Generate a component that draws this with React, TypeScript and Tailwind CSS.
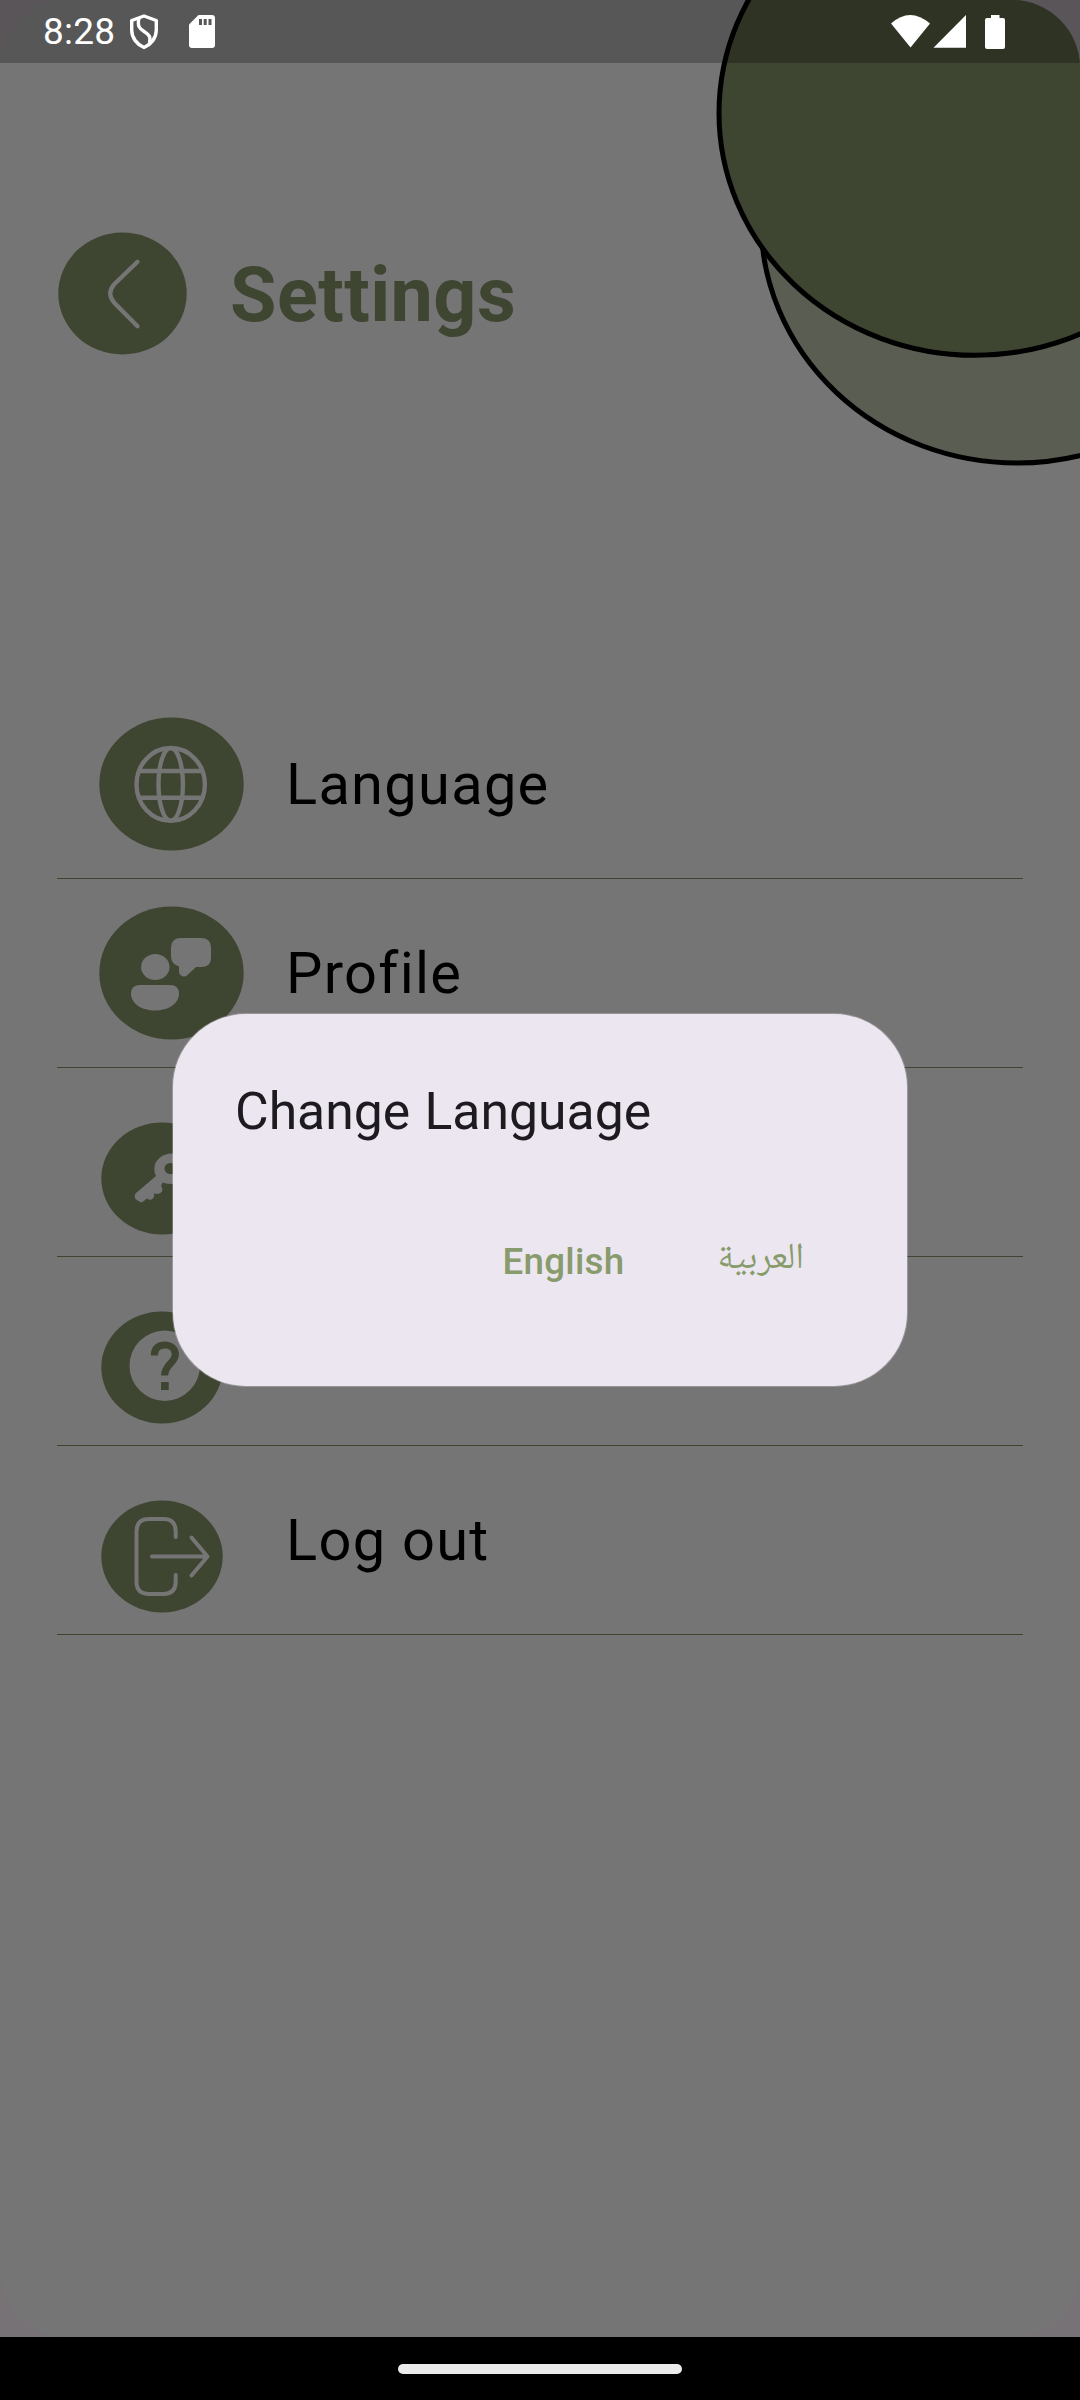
import React from "react";

type BadgeProps = { w: number; h: number; children?: React.ReactNode };

function Badge({ w, h, children }: BadgeProps) {
  return (
    <svg width={w} height={h} viewBox={`0 0 ${w} ${h}`} fill="none" className="block shrink-0">
      <ellipse cx={w / 2} cy={h / 2} rx={w / 2 - 0.3} ry={h / 2 - 0.5} fill="#3e4531" />
      {children}
    </svg>
  );
}

function GlobeIcon() {
  return (
    <Badge w={145} h={134}>
      <g stroke="#757575" strokeWidth="4.4">
        <ellipse cx="71.7" cy="67.4" rx="34.2" ry="36.4" />
        <ellipse cx="71.7" cy="67.4" rx="12.2" ry="36.4" />
        <path d="M41 54H102M41 80.7H102" />
      </g>
    </Badge>
  );
}

function ProfileIcon() {
  return (
    <Badge w={145} h={134}>
      <g fill="#757575">
        <ellipse cx="56.3" cy="61" rx="14.2" ry="13" />
        <path d="M41 79H71Q80 79 80 87.5C80 98 69 104.5 56 104.5C43 104.5 32 98 32 87.5Q32 79 41 79Z" />
        <path d="M82 32H102Q112 32 112 41.500V52Q112 61 102 61H97L88.500 69Q86 71.500 83 70Q80 69 80 65V60.500Q72 58 72 50V41.500Q72 32 82 32Z" />
      </g>
    </Badge>
  );
}

function KeyIcon() {
  return (
    <Badge w={122} h={113}>
      <path
        d="M71 31.500C61 31.500 53.300 38 53.300 47Q53.300 51 55 54L35 71Q32.500 74 34.500 77L39 80Q41.500 81 43.500 78.500L46 76.500Q49 79 52 76.500Q54 74 53 71.500Q59 73 61 69.500Q62 66 60 64L61.500 60.500Q66 62 71 62C81 62 88 55 88 47C88 38 81 31.500 71 31.500Z"
        fill="#757575"
      />
      <ellipse cx="69.500" cy="46.500" rx="6" ry="5.600" fill="#3e4531" />
    </Badge>
  );
}

function HelpIcon() {
  return (
    <Badge w={122} h={113}>
      <circle cx="63.700" cy="54.700" r="35.200" fill="#757575" />
      <path
        d="M53.300 44.500C53.300 37 58 34 63.700 34C70 34 74.300 38 74.300 43.500C74.300 52 63.700 53 63.700 64.500"
        stroke="#3e4531"
        strokeWidth="7.200"
      />
      <rect x="60" y="71" width="7.700" height="8" fill="#3e4531" />
    </Badge>
  );
}

function LogoutIcon() {
  return (
    <Badge w={122} h={113}>
      <g stroke="#757575" strokeWidth="4" strokeLinecap="round" strokeLinejoin="round">
        <path d="M74.700 37V31.500Q74.700 19 62.500 19H48Q35.500 19 35.500 31.500V81.500Q35.500 94 48 94H62.500Q74.700 94 74.700 81.500V75" />
        <path d="M51 56.500H106.500M90.500 37.500L106.500 56.500L90.500 75.500" />
      </g>
    </Badge>
  );
}

const rows = [
  { id: "language", label: "Language", icon: <GlobeIcon />, pad: "pl-[42px] pt-[27px]" },
  { id: "profile", label: "Profile", icon: <ProfileIcon />, pad: "pl-[42px] pt-[27px]" },
  { id: "password", label: "", icon: <KeyIcon />, pad: "pl-[44px] pt-[54px]" },
  { id: "help", label: "", icon: <HelpIcon />, pad: "pl-[44px] pt-[54px]" },
  { id: "logout", label: "Log out", icon: <LogoutIcon />, pad: "pl-[44px] pt-[54px]" },
];

function StatusBar() {
  return (
    <div className="absolute inset-x-0 top-0 flex h-[63px] items-center justify-between bg-black/25 pl-[43px] text-white">
      <div className="flex items-center">
        <span className="w-[86px] text-[37px] leading-none tracking-[0.2px] whitespace-nowrap">8:28</span>
        <svg width="30" height="36" viewBox="0 0 30 36" fill="none" stroke="#fff" strokeWidth="3.400" className="block">
          <path d="M15 2L27.300 6.500V16C27.300 24 22 30.500 15 33.500C8 30.500 2.700 24 2.700 16V6.500Z" strokeLinejoin="round" />
          <path d="M10 4C8 13 11 14.500 15 17.500C20 21 22 22 20.500 29" />
        </svg>
        <svg width="26" height="33" viewBox="0 0 26 33" className="ml-[30px] block">
          <path d="M9.500 0H23Q26 0 26 3V30Q26 33 23 33H3Q0 33 0 30V9.500Z" fill="#fff" />
          <path d="M10 4h3v6h-3zM14.700 4h3v6h-3zM19.500 4h3v6h-3z" fill="#575757" />
        </svg>
      </div>
      <svg width="114" height="34" viewBox="0 0 114 34" fill="#fff" className="mr-[75px] block">
        <path d="M0 8.500Q19 -8.500 39 8.500L19.500 32.500Z" />
        <path d="M75 0V32.700H42.500Z" />
        <path d="M100 0H108.500V3H112Q114 3 114 5V32Q114 34 112 34H96Q94 34 94 32V5Q94 3 96 3H100Z" />
      </svg>
    </div>
  );
}

export default function App() {
  return (
    <div className="relative flex h-[2400px] w-[1080px] flex-col overflow-hidden bg-[#777276] font-['Roboto',sans-serif]">
      <main className="relative h-[2337px] shrink-0 overflow-hidden rounded-[68px] bg-[#757575]">
        <svg width="380" height="480" viewBox="700 0 380 480" className="absolute top-0 right-0" stroke="#000" strokeWidth="5">
          <ellipse cx="1017" cy="221" rx="256" ry="242" fill="#5a5d52" />
          <ellipse cx="975" cy="113" rx="256" ry="242.300" fill="#3e4531" />
        </svg>

        <header className="relative flex h-[355px] items-start pt-[232px] pl-[58px]">
          <Badge w={129} h={123}>
            <path d="M79.500 29.700L56 52.500Q48.500 61.500 56 70.500L79.500 94.300" stroke="#757575" strokeWidth="4.300" strokeLinecap="round" />
          </Badge>
          <h1 className="mt-[20px] ml-[43px] text-[75.500px] leading-[86px] font-bold tracking-[0.450px] text-[#3e4531]">Settings</h1>
        </header>

        <ul className="mt-[335px] mr-[57px] ml-[57px]">
          {rows.map((row) => (
            <li key={row.id} className="flex h-[189px] border-b border-[#3e4531]">
              <div className={`w-[229px] shrink-0 ${row.pad}`}>{row.icon}</div>
              <span className="pt-[60px] text-[57.750px] leading-[68px] tracking-[1.300px] text-black">{row.label}</span>
            </li>
          ))}
        </ul>
      </main>

      <nav className="flex h-[63px] shrink-0 items-start justify-center bg-black pt-[27px]">
        <div className="h-[10px] w-[284px] rounded-full bg-[#ebebeb]" />
      </nav>

      <StatusBar />

      <section
        role="dialog"
        className="absolute top-[1014px] left-[173px] h-[372px] w-[734px] rounded-[73px] bg-[#ece6f0] px-[62px] pt-[63px] shadow-[0_0_0_1px_rgba(236,230,240,0.3)]"
      >
        <h2 className="text-[51.700px] leading-[70px] [word-spacing:1.5px] text-[#1d1b20]">Change Language</h2>
        <div className="mt-[88px] flex justify-end gap-[93px] pr-[41px] text-[36.750px] leading-[54px] font-medium text-[#889b6c]">
          <button className="tracking-[0.260px]">English</button>
          <button lang="ar" dir="rtl" className="-mt-[2px] mb-[2px] font-['Noto_Naskh_Arabic','Noto_Sans_Arabic','DejaVu_Sans',sans-serif] font-normal">
            العربية
          </button>
        </div>
      </section>
    </div>
  );
}
